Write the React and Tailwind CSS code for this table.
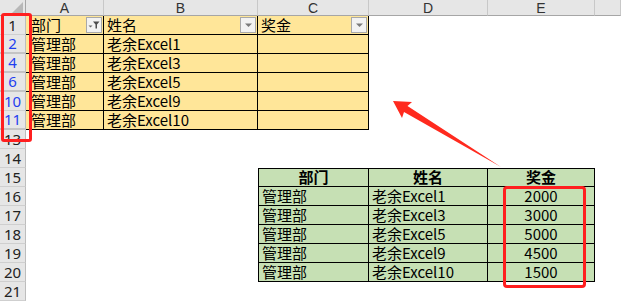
import clsx from 'clsx';

const rowNums = [1, 2, 4, 6, 10, 11, 13, 14, 15, 16, 17, 18, 19, 20, 21];
const hiddenBelow = new Set([2, 4, 6, 11]);
const filteredRows = new Set([2, 4, 6, 10, 11]);

const names = ['老余Excel1', '老余Excel3', '老余Excel5', '老余Excel9', '老余Excel10'];
const bonuses = [2000, 3000, 5000, 4500, 1500];

const cjk = { fontFamily: '"Noto Sans CJK SC", "Noto Sans", sans-serif' };
const head = { fontFamily: '"Noto Sans", "Liberation Sans", sans-serif' };
const letters = { fontFamily: '"Liberation Sans", Arial, sans-serif' };

function DropButton({ filtered }) {
  return (
    <span className="absolute right-[1px] top-[1px] flex h-[16px] w-[16px] items-center justify-center border border-[#a9a9a9] bg-[#f2f2f2]">
      {filtered ? (
        <svg width="12" height="10" viewBox="0 0 12 10">
          <path d="M0.5 5.5h4l-2 2z" fill="#6b6b6b" />
          <path d="M5 1.5h6.5l-2.5 3v4h-1.5v-4z" fill="#4d4d4d" />
        </svg>
      ) : (
        <svg width="9" height="6" viewBox="0 0 9 6">
          <path d="M1 1.5h7l-3.5 3.5z" fill="#7a7a7a" />
        </svg>
      )}
    </span>
  );
}

function Cell({ className, children }) {
  return (
    <div
      className={clsx('relative box-border flex h-[19px] items-end whitespace-nowrap pb-[1px] text-[15px] leading-[17px] text-black', className)}
      style={cjk}
    >
      {children}
    </div>
  );
}

function RowHeader({ num }) {
  return (
    <div
      className={clsx(
        'box-border flex h-[19px] items-center justify-center border-r border-[#bdbdbd] bg-[#e6e6e6] text-[15px] leading-[17px]',
        hiddenBelow.has(num) ? 'border-b-2 border-b-[#c4c4c4]' : 'border-b border-b-[#cfcfcf]',
        filteredRows.has(num) ? 'text-[#1f3ff0]' : 'text-[#222]'
      )}
      style={head}
    >
      {num}
    </div>
  );
}

const yellow = 'bg-[#ffe699] border-b border-r border-black';
const green = 'bg-[#c6e0b4] border-b border-r border-black';

function SheetRow({ num, i }) {
  const cells = [];

  if (i === 0) {
    cells.push(
      <Cell key="a" className={clsx(yellow, 'pl-[5px]')}>部门<DropButton filtered /></Cell>,
      <Cell key="b" className={clsx(yellow, 'pl-[3px]')}>姓名<DropButton /></Cell>,
      <Cell key="c" className={clsx(yellow, 'pl-[3px]')}>奖金<DropButton /></Cell>,
      <Cell key="d" />,
      <Cell key="e" />,
      <Cell key="f" />
    );
  } else if (i <= 5) {
    cells.push(
      <Cell key="a" className={clsx(yellow, 'pl-[5px]')}>管理部</Cell>,
      <Cell key="b" className={clsx(yellow, 'pl-[3px]')}>{names[i - 1]}</Cell>,
      <Cell key="c" className={yellow} />,
      <Cell key="d" />,
      <Cell key="e" />,
      <Cell key="f" />
    );
  } else if (num === 15) {
    cells.push(
      <Cell key="a" />,
      <Cell key="b" />,
      <Cell key="c" className={clsx(green, 'justify-center border-l border-t font-bold')}>部门</Cell>,
      <Cell key="d" className={clsx(green, 'justify-center border-t font-bold')}>姓名</Cell>,
      <Cell key="e" className={clsx(green, 'justify-center border-t font-bold')}>奖金</Cell>,
      <Cell key="f" />
    );
  } else if (num >= 16 && num <= 20) {
    const k = num - 16;
    cells.push(
      <Cell key="a" />,
      <Cell key="b" />,
      <Cell key="c" className={clsx(green, 'border-l pl-[3px]')}>管理部</Cell>,
      <Cell key="d" className={clsx(green, 'pl-[3px]')}>{names[k]}</Cell>,
      <Cell key="e" className={clsx(green, 'justify-center')}>{bonuses[k]}</Cell>,
      <Cell key="f" />
    );
  } else {
    ['a', 'b', 'c', 'd', 'e', 'f'].forEach((k) => cells.push(<Cell key={k} />));
  }

  return (
    <>
      <RowHeader num={num} />
      {cells}
    </>
  );
}

export default function App() {
  return (
    <div className="relative h-[302px] w-[621px] overflow-hidden bg-white">
      <div className="grid grid-cols-[26px_78px_154px_111px_119px_107px_1fr]">
        {/* column headers */}
        <div className="relative box-border h-[16px] border-b border-r border-[#a6a6a6] bg-[#e6e6e6]">
          <svg className="absolute bottom-[2px] right-[2px]" width="11" height="11" viewBox="0 0 11 11">
            <path d="M11 0v11H0z" fill="#b8b8b8" />
          </svg>
        </div>
        {['A', 'B', 'C', 'D', 'E', ''].map((c) => (
          <div
            key={c || 'f'}
            className="box-border flex h-[16px] items-center justify-center border-b border-r border-b-[#a6a6a6] border-r-[#c8c8c8] bg-[#e6e6e6] text-[14px] leading-[14px] text-[#333]"
            style={letters}
          >
            {c}
          </div>
        ))}
        {rowNums.map((num, i) => (
          <SheetRow key={num} num={num} i={i} />
        ))}
      </div>

      {/* annotations */}
      <div className="pointer-events-none absolute left-[1px] top-[13px] h-[129px] w-[31px] rounded-[3px] border-[3px] border-[#ff1f1f]" />
      <div className="pointer-events-none absolute left-[503px] top-[186px] h-[102px] w-[83px] rounded-[4px] border-[3px] border-[#ff1f1f]" />
      <svg className="pointer-events-none absolute left-0 top-0" width="621" height="302" viewBox="0 0 621 302">
        <path d="M393 101 L412 102 L407.5 106 L501 167 L404 112 L402 118 Z" fill="#ff2a1e" />
      </svg>
    </div>
  );
}
